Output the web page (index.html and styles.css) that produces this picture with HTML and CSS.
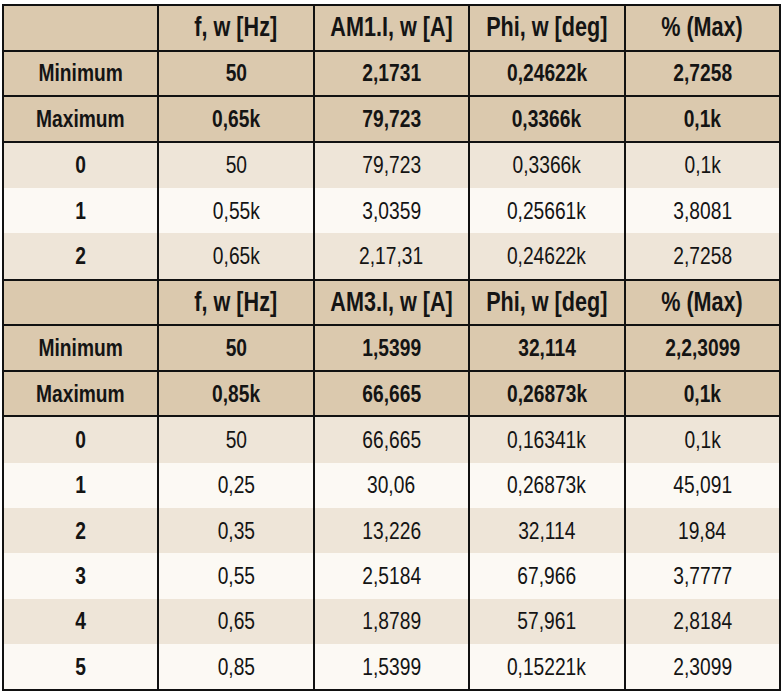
FILE: index.html
```html
<!DOCTYPE html>
<html>
<head>
<meta charset="utf-8">
<link rel="stylesheet" href="styles.css">
</head>
<body>
<table class="data">
  <tbody>
    <tr class="head title"><th></th><th><span>f, w [Hz]</span></th><th><span>AM1.I, w [A]</span></th><th><span>Phi, w [deg]</span></th><th><span>% (Max)</span></th></tr>
    <tr class="head"><th><span>Minimum</span></th><td><span>50</span></td><td><span>2,1731</span></td><td><span>0,24622k</span></td><td><span>2,7258</span></td></tr>
    <tr class="head"><th><span>Maximum</span></th><td><span>0,65k</span></td><td><span>79,723</span></td><td><span>0,3366k</span></td><td><span>0,1k</span></td></tr>
    <tr class="odd"><th><span>0</span></th><td><span>50</span></td><td><span>79,723</span></td><td><span>0,3366k</span></td><td><span>0,1k</span></td></tr>
    <tr class="even"><th><span>1</span></th><td><span>0,55k</span></td><td><span>3,0359</span></td><td><span>0,25661k</span></td><td><span>3,8081</span></td></tr>
    <tr class="odd"><th><span>2</span></th><td><span>0,65k</span></td><td><span>2,17,31</span></td><td><span>0,24622k</span></td><td><span>2,7258</span></td></tr>
    <tr class="head title"><th></th><th><span>f, w [Hz]</span></th><th><span>AM3.I, w [A]</span></th><th><span>Phi, w [deg]</span></th><th><span>% (Max)</span></th></tr>
    <tr class="head"><th><span>Minimum</span></th><td><span>50</span></td><td><span>1,5399</span></td><td><span>32,114</span></td><td><span>2,2,3099</span></td></tr>
    <tr class="head"><th><span>Maximum</span></th><td><span>0,85k</span></td><td><span>66,665</span></td><td><span>0,26873k</span></td><td><span>0,1k</span></td></tr>
    <tr class="odd"><th><span>0</span></th><td><span>50</span></td><td><span>66,665</span></td><td><span>0,16341k</span></td><td><span>0,1k</span></td></tr>
    <tr class="even"><th><span>1</span></th><td><span>0,25</span></td><td><span>30,06</span></td><td><span>0,26873k</span></td><td><span>45,091</span></td></tr>
    <tr class="odd"><th><span>2</span></th><td><span>0,35</span></td><td><span>13,226</span></td><td><span>32,114</span></td><td><span>19,84</span></td></tr>
    <tr class="even"><th><span>3</span></th><td><span>0,55</span></td><td><span>2,5184</span></td><td><span>67,966</span></td><td><span>3,7777</span></td></tr>
    <tr class="odd"><th><span>4</span></th><td><span>0,65</span></td><td><span>1,8789</span></td><td><span>57,961</span></td><td><span>2,8184</span></td></tr>
    <tr class="even last"><th><span>5</span></th><td><span>0,85</span></td><td><span>1,5399</span></td><td><span>0,15221k</span></td><td><span>2,3099</span></td></tr>
  </tbody>
</table>
</body>
</html>
```
FILE: styles.css
```css
html, body {
  margin: 0;
  padding: 0;
  background: #ffffff;
}
body {
  padding: 4px 0 0 2px;
  font-family: "Liberation Sans", Arial, sans-serif;
  color: #141414;
}
.data {
  border-collapse: collapse;
  width: 779px;
  table-layout: fixed;
}
.data th,
.data td {
  border-left: 2px solid #111;
  border-right: 2px solid #111;
  text-align: center;
  vertical-align: middle;
  padding: 0;
  height: 45.3px;
  font-size: 24px;
  line-height: 1;
  white-space: nowrap;
}
.data span {
  display: inline-block;
  transform: scaleX(0.8);
  transform-origin: center;
}
.data th { font-weight: bold; }
.data td { font-weight: normal; }
.head th,
.head td {
  height: 43.6px;
  background: #dbc9ae;
  font-weight: bold;
  border-top: 2px solid #111;
  border-bottom: 2px solid #111;
}
.title th { font-size: 27px; }
.odd th, .odd td { background: #eee5d8; }
.even th, .even td { background: #fcf9f4; }
.last th, .last td { border-bottom: 2px solid #111; }
```
